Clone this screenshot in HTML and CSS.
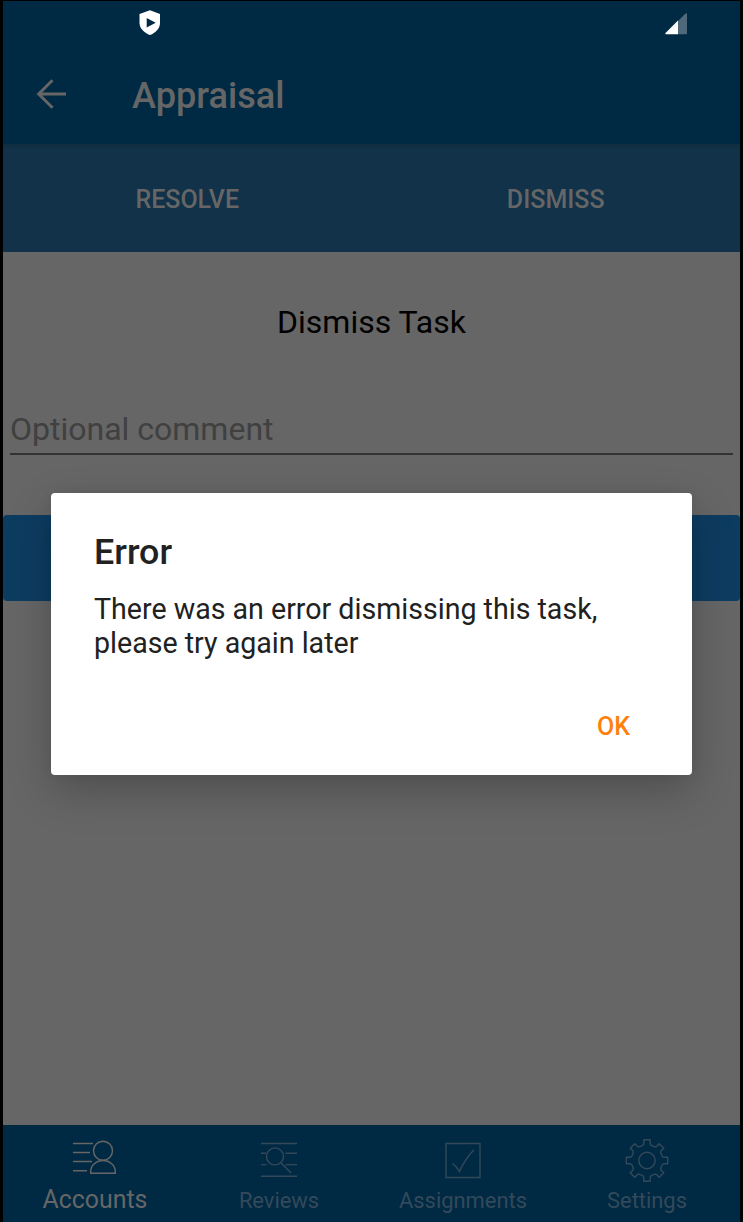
FILE: index.html
```html
<!DOCTYPE html>
<html lang="en">
<head>
<meta charset="utf-8">
<title>Appraisal</title>
<link rel="stylesheet" href="styles.css">
</head>
<body>
<div class="screen">
  <header class="header">
    <div class="status">
      <svg class="shield" width="22" height="26" viewBox="0 0 22 26"><path fill="#fff" fill-rule="evenodd" d="M11 .3 21 4v9c0 5.500-4.500 10-10 12C5.500 23 .5 18.500.5 13V4zM7.700 8v9.500l9-4.700z"/></svg>
      <svg class="signal" width="22" height="22" viewBox="0 0 22 22"><path fill="#4f697b" d="M13 8 20.500.500Q22-.2 22 1v19.500q0 .8-1 .8h-8z"/><path fill="#fff" d="M13 7.500v13.800H.8q-1-.5-.3-1.300z"/></svg>
    </div>
    <div class="appbar">
      <svg class="back" width="30" height="30" viewBox="0 0 30 30"><path d="M16.500 1.300 2.700 15 16.500 28.700M3 15H30" fill="none" stroke="#666" stroke-width="3"/></svg>
      <h1 class="title">Appraisal</h1>
    </div>
  </header>
  <div class="tabs"><span class="tab">RESOLVE</span><span class="tab">DISMISS</span></div>
  <main class="content">
    <h2 class="heading">Dismiss Task</h2>
    <div class="field">Optional comment</div>
    <div class="submit"></div>
  </main>
  <nav class="nav">
    <div class="item active">
      <svg class="icon" width="44" height="44" viewBox="0 0 44 44"><path d="M0 5.500h20M0 14.500h17M0 23.500h19M0 32.700h14"/><circle cx="30" cy="12.800" r="9.500"/><path d="M17.700 35.200V33.500a12.300 11 0 0 1 24.600 0v1.700z"/></svg>
      <span class="label">Accounts</span>
    </div>
    <div class="item">
      <svg class="icon" width="44" height="44" viewBox="0 0 44 44"><path d="M4 5.500h36M4 15.200h5M28.500 15.200H40M4 26.600h5.500M28.500 26.600H40M4 38.300h36M24 24.700 34 34.900"/><circle cx="18" cy="18.400" r="8.500"/></svg>
      <span class="label">Reviews</span>
    </div>
    <div class="item">
      <svg class="icon" width="44" height="44" viewBox="0 0 44 44"><path d="M5 5.500h34v34H5zM11.500 25.500q4 3 7 8Q24 21 33 11.800"/></svg>
      <span class="label">Assignments</span>
    </div>
    <div class="item">
      <svg class="icon" width="44" height="44" viewBox="-22 -22.500 44 44"><path stroke-linejoin="round" d="M-4.200-15.200-3.200-16.500V-20.700H3.200V-16.500L4.200-15.200 7.800-13.700 9.400-13.900 12.300-16.800 16.800-12.300 13.900-9.400 13.700-7.800 15.200-4.200 16.500-3.200H20.700V3.200H16.500L15.200 4.200 13.700 7.800 13.900 9.400 16.800 12.300 12.300 16.800 9.400 13.900 7.800 13.700 4.200 15.200 3.200 16.500V20.700H-3.200V16.500L-4.200 15.200-7.800 13.700-9.400 13.900-12.300 16.800-16.800 12.300-13.900 9.400-13.700 7.800-15.200 4.200-16.500 3.200H-20.700V-3.200H-16.500L-15.200-4.200-13.700-7.800-13.900-9.400-16.800-12.300-12.300-16.800-9.400-13.900-7.800-13.700z"/><circle r="8.200"/></svg>
      <span class="label">Settings</span>
    </div>
  </nav>
  <div class="overlay">
    <section class="dialog" role="alertdialog">
      <h2 class="dialog-title">Error</h2>
      <p class="message">There was an error dismissing this task,<br>please try again later</p>
      <div class="actions"><span class="ok">OK</span></div>
    </section>
  </div>
</div>
</body>
</html>
```
FILE: styles.css
```css
* { box-sizing: border-box; }
body { margin: 0; background: #000; font-family: Roboto, sans-serif; }
h1, h2, p { margin: 0; font-weight: 400; }
svg { display: block; flex: none; }
.screen {
  position: relative;
  display: flex;
  flex-direction: column;
  width: 743px;
  height: 1222px;
  padding: 1px 3px 0;
  overflow: hidden;
}
.header { height: 143px; background: #002a43; }
.status {
  display: flex;
  justify-content: space-between;
  height: 43px;
  padding: 9px 53px 0 136px;
}
.signal { margin-top: 3px; }
.appbar { display: flex; align-items: center; height: 100px; padding-left: 33px; }
.title {
  margin: 3px 0 0 66px;
  font-size: 36.200px;
  line-height: 42px;
  font-weight: 500;
  color: #666;
}
.tabs {
  display: grid;
  grid-template-columns: 1fr 1fr;
  height: 108px;
  padding-top: 2px;
  background: linear-gradient(#102d40, #113249 6px);
}
.tab {
  display: flex;
  align-items: center;
  justify-content: center;
  font-size: 25px;
  font-weight: 500;
  color: #666;
}
.content { flex: 1; padding-top: 50px; background: #666; }
.heading { font-size: 32px; line-height: 40px; text-align: center; color: #000; }
.field {
  height: 57px;
  margin: 56px 7px 0;
  padding-top: 11px;
  border-bottom: 2px solid #333;
  font-size: 32px;
  line-height: 40px;
  color: #404040;
}
.submit { height: 86px; margin-top: 60px; border-radius: 4px; background: #0d3c61; }
.nav {
  display: grid;
  grid-template-columns: repeat(4, 1fr);
  height: 97px;
  padding-right: 1px;
  background: #002a43;
}
.item {
  display: flex;
  flex-direction: column;
  align-items: center;
  padding-top: 13px;
  color: #33495a;
}
.icon { fill: none; stroke: currentColor; stroke-width: 1.400; }
.label { margin-top: 6px; font-size: 21.900px; line-height: 26px; }
.active { color: #666; }
.active .label { margin-top: 4px; font-size: 24.900px; line-height: 28px; }
.overlay {
  position: absolute;
  inset: 0 3px;
  padding: 493.400px 48px 0;
  overflow: hidden;
}
.dialog {
  height: 282px;
  padding: 37.600px 43px 0;
  border-radius: 4px;
  background: #fff;
  box-shadow: 0 16px 44px rgba(0, 0, 0, .23), 0 0 12px rgba(0, 0, 0, .05);
  color: #212121;
}
.dialog-title { font-size: 35.800px; line-height: 42px; font-weight: 500; }
.message { margin-top: 19px; font-size: 28.600px; line-height: 34px; white-space: nowrap; }
.actions { display: flex; justify-content: flex-end; padding: 52px 19px 0 0; }
.ok { font-size: 25px; line-height: 30px; font-weight: 500; color: #ff800b; }
```
